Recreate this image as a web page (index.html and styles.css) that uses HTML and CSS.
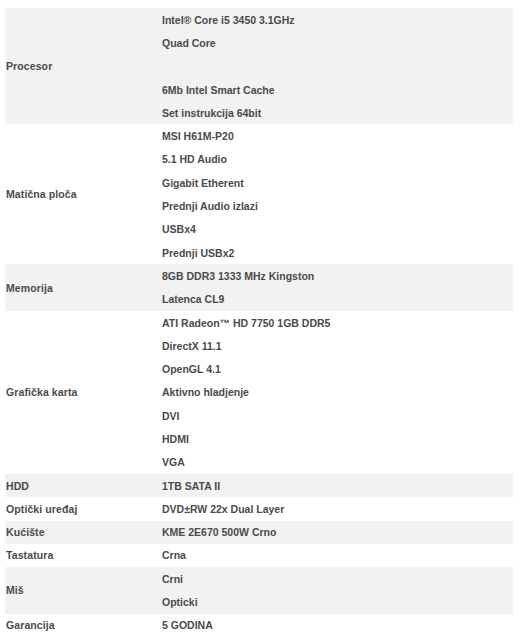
FILE: index.html
```html
<!DOCTYPE html>
<html lang="sr">
<head>
    <meta charset="UTF-8">
    <meta name="viewport" content="width=device-width, initial-scale=1.0">
    <title>Specifikacija</title>
    <link rel="stylesheet" href="styles.css">
</head>
<body>
    <table class="specs">
        <tr class="shaded">
            <td class="label" rowspan="5">Procesor</td>
            <td>Intel® Core i5 3450 3.1GHz</td>
        </tr>
        <tr class="shaded"><td>Quad Core</td></tr>
        <tr class="shaded"><td></td></tr>
        <tr class="shaded"><td>6Mb Intel Smart Cache</td></tr>
        <tr class="shaded"><td>Set instrukcija 64bit</td></tr>

        <tr>
            <td class="label" rowspan="6">Matična ploča</td>
            <td>MSI H61M-P20</td>
        </tr>
        <tr><td>5.1 HD Audio</td></tr>
        <tr><td>Gigabit Etherent</td></tr>
        <tr><td>Prednji Audio izlazi</td></tr>
        <tr><td>USBx4</td></tr>
        <tr><td>Prednji USBx2</td></tr>

        <tr class="shaded">
            <td class="label" rowspan="2">Memorija</td>
            <td>8GB DDR3 1333 MHz Kingston</td>
        </tr>
        <tr class="shaded"><td>Latenca CL9</td></tr>

        <tr>
            <td class="label" rowspan="7">Grafička karta</td>
            <td>ATI Radeon™ HD 7750 1GB DDR5</td>
        </tr>
        <tr><td>DirectX 11.1</td></tr>
        <tr><td>OpenGL 4.1</td></tr>
        <tr><td>Aktivno hladjenje</td></tr>
        <tr><td>DVI</td></tr>
        <tr><td>HDMI</td></tr>
        <tr><td>VGA</td></tr>

        <tr class="shaded">
            <td class="label">HDD</td>
            <td>1TB SATA II</td>
        </tr>
        <tr>
            <td class="label">Optički uređaj</td>
            <td>DVD±RW 22x Dual Layer</td>
        </tr>
        <tr class="shaded">
            <td class="label">Kućište</td>
            <td>KME 2E670 500W Crno</td>
        </tr>
        <tr>
            <td class="label">Tastatura</td>
            <td>Crna</td>
        </tr>
        <tr class="shaded">
            <td class="label" rowspan="2">Miš</td>
            <td>Crni</td>
        </tr>
        <tr class="shaded"><td>Opticki</td></tr>
        <tr>
            <td class="label">Garancija</td>
            <td>5 GODINA</td>
        </tr>
    </table>
</body>
</html>
```

FILE: styles.css
```css
body {
    margin: 8px 9px 0 5px;
    background-color: #fff;
    font-family: "Liberation Sans", Arial, sans-serif;
    font-size: 10.5px;
    font-weight: bold;
    color: #4a4a4a;
}
.specs {
    width: 508px;
    border-collapse: collapse;
    border-spacing: 0;
}
.specs td {
    height: 23.3px;
    padding: 0;
    vertical-align: middle;
    text-align: left;
    white-space: nowrap;
}
.specs .label {
    width: 156px;
    padding-left: 1px;
    letter-spacing: 0.1px;
}
.shaded {
    background-color: #f2f2f2;
}
```
